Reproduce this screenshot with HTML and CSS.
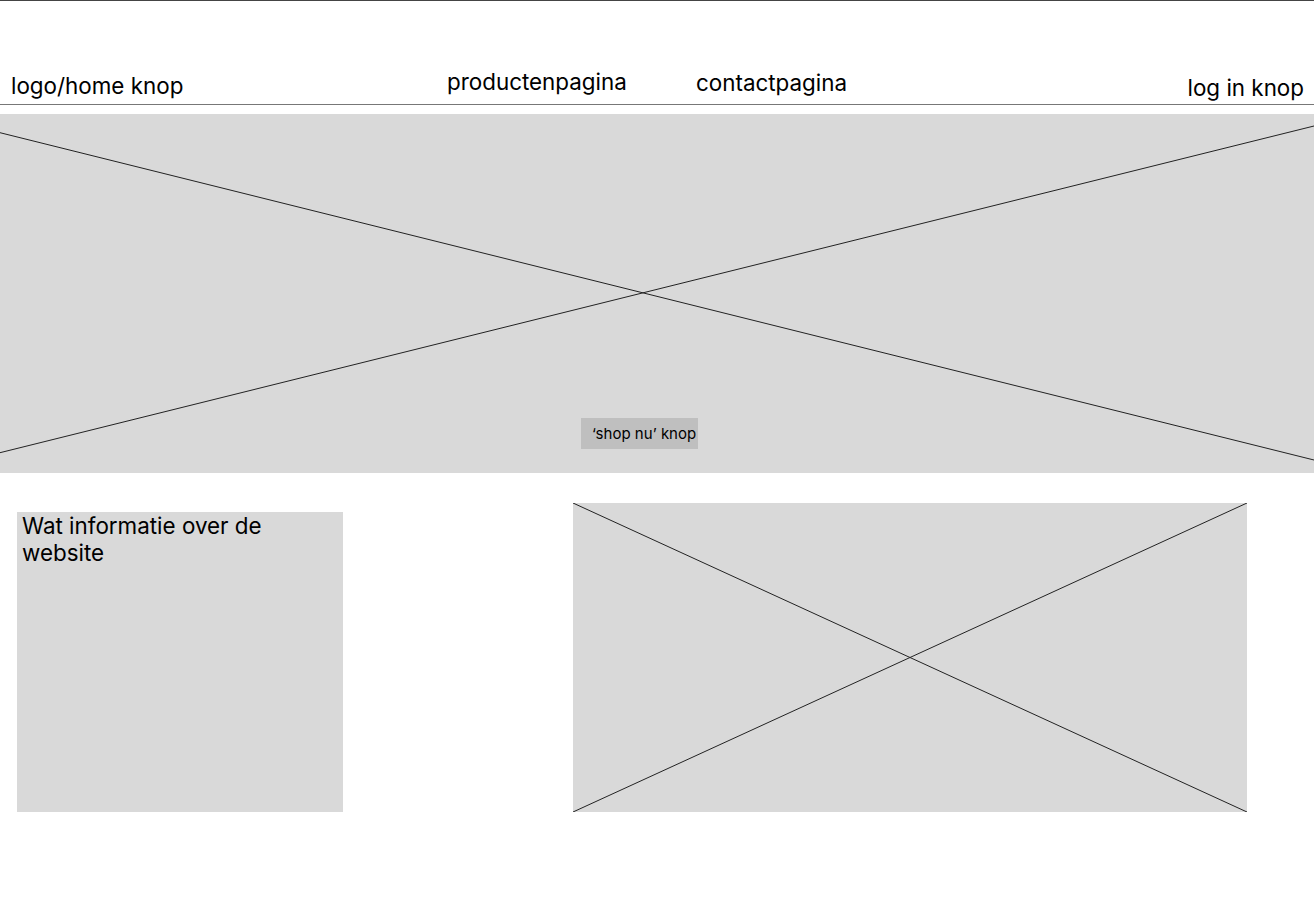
FILE: index.html
```html
<!DOCTYPE html>
<html>
<head>
	<meta charset="utf-8">
	<title>Home</title>
	<link rel="stylesheet" href="styles.css">
</head>
<body>
	<!----- Navigatie ---------------------------------------------------------->
	<header class="topbar">
		<a class="nav-item nav-logo" href="#">logo/home knop</a>
		<a class="nav-item nav-products" href="#">productenpagina</a>
		<a class="nav-item nav-contact" href="#">contactpagina</a>
		<a class="nav-item nav-login" href="#">log in knop</a>
	</header>

	<!----- Hero ---------------------------------------------------------->
	<section class="hero">
		<svg class="cross" viewBox="0 0 1314 359" preserveAspectRatio="none">
			<line x1="0" y1="18.7" x2="1314" y2="346" />
			<line x1="0" y1="338.7" x2="1314" y2="12" />
		</svg>
		<a class="shop-btn" href="#">&lsquo;shop nu&rsquo; knop</a>
	</section>

	<!----- Info en afbeelding ---------------------------------------------------------->
	<section class="content">
		<div class="info">
			<p>Wat informatie over de website</p>
		</div>
		<div class="picture">
			<svg class="cross" viewBox="0 0 674 309" preserveAspectRatio="none">
				<line x1="0" y1="0" x2="674" y2="309" />
				<line x1="0" y1="309" x2="674" y2="0" />
			</svg>
		</div>
	</section>
</body>
</html>
```
FILE: styles.css
```css
body {
	margin: 0;
	font-family: Inter, "Liberation Sans", sans-serif;
	color: #000;
	background: #fff;
	border-top: 1px solid #444;
}

.topbar {
	display: grid;
	grid-template-columns: 436px 249px 1fr auto;
	align-items: end;
	height: 103px;
	padding: 0 10px 0 11px;
	border-bottom: 1px solid #777;
}
.nav-item {
	color: #000;
	text-decoration: none;
	font-size: 22.4px;
	line-height: 27px;
}
.nav-logo { margin-bottom: 5px; }
.nav-products { margin-bottom: 9px; }
.nav-contact { margin-bottom: 8px; }
.nav-login { margin-bottom: 3px; }

.hero {
	position: relative;
	display: flex;
	align-items: flex-end;
	height: 359px;
	margin-top: 9px;
	padding-left: 581px;
	box-sizing: border-box;
	padding-bottom: 24px;
	background-color: #d9d9d9;
}
.cross {
	position: absolute;
	top: 0;
	left: 0;
	width: 100%;
	height: 100%;
}
.cross line {
	stroke: #222;
	stroke-width: 1;
}
.shop-btn {
	position: relative;
	display: flex;
	align-items: center;
	width: 117px;
	height: 31px;
	padding-left: 11px;
	box-sizing: border-box;
	background-color: #bfbfbf;
	color: #000;
	text-decoration: none;
	font-size: 15px;
	white-space: nowrap;
}

.content {
	display: flex;
	align-items: flex-start;
	padding: 30px 0 0 17px;
}
.info {
	width: 326px;
	height: 300px;
	margin-top: 9px;
	padding-left: 5px;
	box-sizing: border-box;
	background-color: #d9d9d9;
}
.info p {
	width: 285px;
	margin: 0;
	font-size: 22.4px;
	line-height: 27px;
}
.picture {
	position: relative;
	width: 674px;
	height: 309px;
	margin-left: 230px;
	background-color: #d9d9d9;
}
```
